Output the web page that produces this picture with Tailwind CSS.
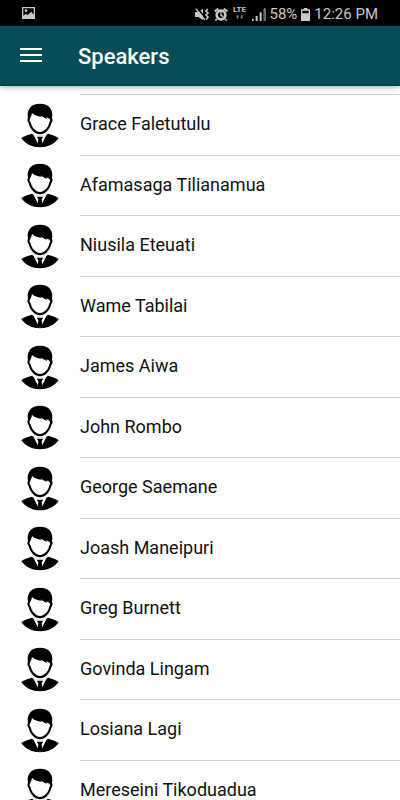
<!DOCTYPE html>
<html lang="en">
<head>
  <meta charset="UTF-8" />
  <meta name="viewport" content="width=device-width, initial-scale=1.0"/>
  <title>Speakers</title>
  <script src="https://cdn.jsdelivr.net/npm/@tailwindcss/browser@4"></script>
</head>
<body class="h-screen flex flex-col overflow-hidden bg-white text-[#111] font-['Roboto',sans-serif]">

  <!-- Status bar -->
  <div class="h-[26px] shrink-0 bg-black text-[#c8c8c8] flex items-center justify-between px-[22px]">
    <svg class="w-[13px] h-3" viewBox="0 0 39 36" fill="currentColor" aria-hidden="true">
      <path fill-rule="evenodd" d="M0 0h39v36H0zM4 4v22l7-6 6 4 11-10 7 9V4z"/>
      <circle cx="12" cy="11" r="4"/>
    </svg>
    <div class="flex items-center gap-1 pt-[2px]">
      <!-- Vibrate -->
      <svg class="w-[15px] h-[13px]" viewBox="0 0 45 39" fill="currentColor" aria-hidden="true">
        <path d="M0 12h10L24 2v34L10 27H0z"/>
        <path d="M7 0l24 30" stroke="#000" stroke-width="4"/>
        <path d="M2 2l28 34" fill="none" stroke="currentColor" stroke-width="4"/>
        <path d="M38 3l-5 6 6 6-6 6 6 6-5 8" fill="none" stroke="currentColor" stroke-width="5"/>
      </svg>
      <!-- Alarm -->
      <svg class="w-[14px] h-[13px]" viewBox="0 0 42 39" fill="none" stroke="currentColor" aria-hidden="true">
        <circle cx="21" cy="21" r="13" stroke-width="8"/>
        <path d="M2 10l11-8M40 10L29 2" stroke-width="6"/>
        <path d="M9 33l-5 5M33 33l5 5" stroke-width="5"/>
        <path d="M21 13v9l7 4" stroke-width="4"/>
      </svg>
      <!-- Network -->
      <div class="flex flex-col items-center w-4 pb-1 gap-px">
        <span class="text-[8px] leading-[8px] font-bold">LTE</span>
        <svg class="w-2 h-1" viewBox="0 0 24 12" fill="#777" aria-hidden="true">
          <path d="M5 0l5 5H7v7H3V5H0zM17 12l-5-5h3V0h4v7h3z"/>
        </svg>
      </div>
      <svg class="w-[14px] h-[13px]" viewBox="0 0 42 39" fill="currentColor" aria-hidden="true">
        <path d="M0 32h5v7H0zM11 24h6v15h-6zM23 13h6v26h-6z"/>
        <path d="M36 2h4v35h-4z" fill="#222" stroke="currentColor" stroke-width="2"/>
      </svg>
      <span class="text-[15px] leading-4">58%</span>
      <!-- Battery -->
      <svg class="w-[9px] h-[13px]" viewBox="0 0 27 39" fill="currentColor" aria-hidden="true">
        <path fill-rule="evenodd" d="M8 0h11v4h8v35H0V4h8zM4 8v8h19V8z"/>
      </svg>
      <span class="text-[15px] leading-4">12:26 PM</span>
    </div>
  </div>

  <!-- Toolbar -->
  <header class="relative z-10 h-[60px] shrink-0 bg-[#074d57] border-b border-[#033e47] shadow-[0_1px_5px_rgba(0,0,0,0.35)] flex items-center pl-5 pt-[2px]">
    <button type="button" aria-label="Menu" class="w-[22px] h-6 flex flex-col justify-center gap-1 pb-1">
      <span class="h-[2px] w-full bg-white"></span>
      <span class="h-[2px] w-full bg-white"></span>
      <span class="h-[2px] w-full bg-white"></span>
    </button>
    <h1 class="ml-9 text-[22px] leading-7 font-medium text-white">Speakers</h1>
  </header>

  <!-- Speaker list -->
  <main class="flex-1 overflow-y-auto [scrollbar-width:none] pt-2">
    <div class="ml-20 h-px bg-[#cfcfcf]"></div>
    <ul id="speakerList"></ul>
  </main>

  <svg class="hidden">
    <symbol id="avatar" viewBox="30 38 120 138">
      <path d="M54 83C49 58 63 40 90 40s41 18 36 43c3 3 2 11-2 15-4 19-19 34-34 34S60 117 56 98c-4-4-5-12-2-15z"/>
      <path fill="#fff" d="M59 86c3-5 6-11 7-18 9 8 20 11 30 11l-5-5c7 6 14 10 21 12l-4-6c6 3 11 5 12 8 1 3 0 6-2 8-3 17-16 29-28 29S65 112 62 96c-3-2-4-6-3-10z"/>
      <path d="M34 144c3-5 19-10 32-14 8 8 40 8 48 0 13 4 29 9 32 14-14 18-33 27-56 27s-42-9-56-27z"/>
      <path fill="#fff" d="M69 130c12 7 30 7 42 0l-18 36h-6z"/>
      <path d="M80 139h20l-5 8 3 20H82l3-20z"/>
    </symbol>
  </svg>

  <script>
    const speakers = [
      'Grace Faletutulu',
      'Afamasaga Tilianamua',
      'Niusila Eteuati',
      'Wame Tabilai',
      'James Aiwa',
      'John Rombo',
      'George Saemane',
      'Joash Maneipuri',
      'Greg Burnett',
      'Govinda Lingam',
      'Losiana Lagi',
      'Mereseini Tikoduadua'
    ];

    document.getElementById('speakerList').innerHTML = speakers.map(name => `
      <li class="odd:h-[61px] even:h-[60px] pl-5">
        <a href="#" class="h-full flex items-center gap-5">
          <svg class="w-10 h-[46px] shrink-0" aria-hidden="true"><use href="#avatar"/></svg>
          <span class="flex-1 h-full flex items-center pb-[2px] border-b border-[#cfcfcf] text-[18px] leading-6">${name}</span>
        </a>
      </li>
    `).join('');
  </script>

</body>
</html>
